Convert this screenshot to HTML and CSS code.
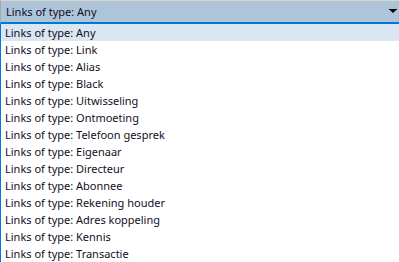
FILE: index.html
```html
<!DOCTYPE html>
<html>

<head>
    <meta charset="UTF-8" />
    <title>Links of type</title>
    <link rel="stylesheet" href="styles.css">
</head>

<body>
    <div class="select">
        <div class="select-value">Links of type: Any</div>
        <svg class="select-arrow" width="8" height="5" viewBox="0 0 8 5">
            <path d="M0 0H8V1H7L4 4L1 1H0Z" fill="#000" />
        </svg>
    </div>
    <ul class="options">
        <li class="option selected">Links of type: Any</li>
        <li class="option">Links of type: Link</li>
        <li class="option">Links of type: Alias</li>
        <li class="option">Links of type: Black</li>
        <li class="option">Links of type: Uitwisseling</li>
        <li class="option">Links of type: Ontmoeting</li>
        <li class="option">Links of type: Telefoon gesprek</li>
        <li class="option">Links of type: Eigenaar</li>
        <li class="option">Links of type: Directeur</li>
        <li class="option">Links of type: Abonnee</li>
        <li class="option">Links of type: Rekening houder</li>
        <li class="option">Links of type: Adres koppeling</li>
        <li class="option">Links of type: Kennis</li>
        <li class="option">Links of type: Transactie</li>
    </ul>
</body>

</html>
```

FILE: styles.css
```css
body {
    margin: 0;
    font-family: "Noto Sans", sans-serif;
    font-size: 11px;
    color: #150d1e;
    background: #ffffff;
}

.select {
    height: 21px;
    display: flex;
    align-items: center;
    justify-content: space-between;
    padding: 0 2px 0 5px;
    background-color: #adc4d9;
    border-top: solid 1px #d8d8cc;
    border-left: solid 1px #a0a8b0;
    border-bottom: solid 2px #0078d7;
}

.options {
    list-style: none;
    margin: 0;
    padding: 0;
    border-left: solid 1px #0078d7;
}

.option {
    height: 17px;
    line-height: 17px;
    padding-left: 4px;
    white-space: nowrap;
}

.selected {
    background-color: #dae6f1;
}
```
